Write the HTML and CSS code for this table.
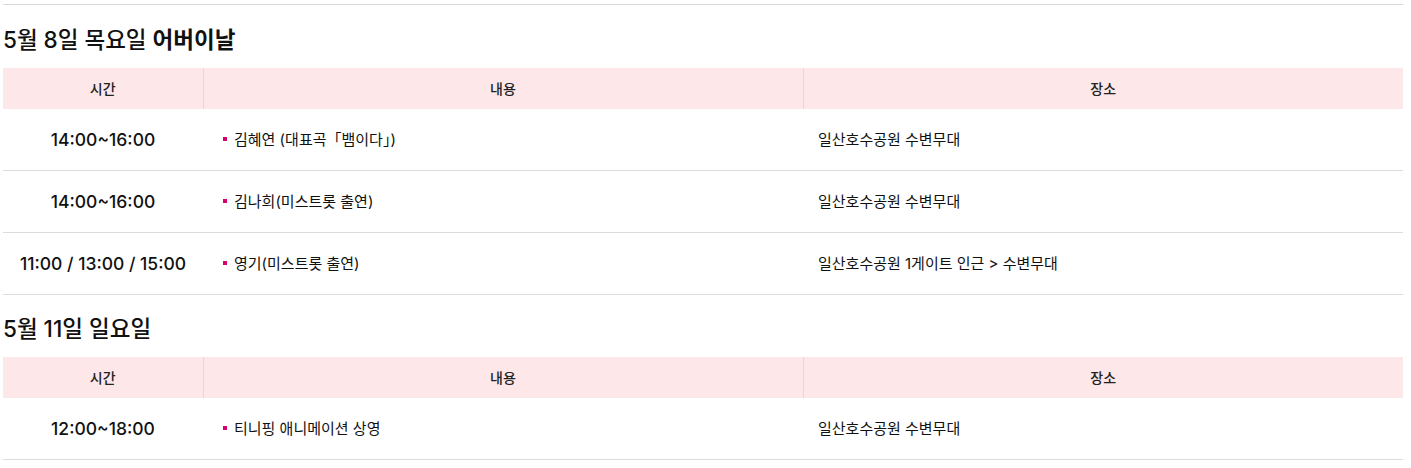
FILE: index.html
```html
<!DOCTYPE html>
<html lang="ko">
<head>
<meta charset="utf-8">
<link rel="stylesheet" href="styles.css">
</head>
<body>
<div class="wrap">
  <section class="day first">
    <h2 class="day-title">5월 8일 목요일 <strong>어버이날</strong></h2>
    <table class="sched">
      <colgroup><col class="c-time"><col class="c-cont"><col class="c-place"></colgroup>
      <thead><tr><th>시간</th><th>내용</th><th>장소</th></tr></thead>
      <tbody>
        <tr><td class="time">14:00~16:00</td><td class="cont"><span class="dot"></span>김혜연 (대표곡「뱀이다」)</td><td class="place">일산호수공원 수변무대</td></tr>
        <tr><td class="time">14:00~16:00</td><td class="cont"><span class="dot"></span>김나희(미스트롯 출연)</td><td class="place">일산호수공원 수변무대</td></tr>
        <tr><td class="time">11:00 / 13:00 / 15:00</td><td class="cont"><span class="dot"></span>영기(미스트롯 출연)</td><td class="place">일산호수공원 1게이트 인근 &gt; 수변무대</td></tr>
      </tbody>
    </table>
  </section>
  <section class="day">
    <h2 class="day-title">5월 11일 일요일</h2>
    <table class="sched">
      <colgroup><col class="c-time"><col class="c-cont"><col class="c-place"></colgroup>
      <thead><tr><th>시간</th><th>내용</th><th>장소</th></tr></thead>
      <tbody>
        <tr><td class="time">12:00~18:00</td><td class="cont"><span class="dot"></span>티니핑 애니메이션 상영</td><td class="place">일산호수공원 수변무대</td></tr>
      </tbody>
    </table>
  </section>
</div>
</body>
</html>
```
FILE: styles.css
```css
html, body { margin: 0; padding: 0; background: #fff; }
body {
  font-family: "Inter", "Noto Sans CJK KR", "Noto Sans", sans-serif;
  color: #111;
}
.wrap { padding: 4px 8px 0 3px; }
.day.first { border-top: 1px solid #d9d9d9; }
.day-title {
  margin: 20px 0 13px;
  font-size: 22.5px;
  line-height: 30px;
  font-weight: 500;
  color: #111;
}
.day + .day .day-title { margin-top: 19px; }
.day-title strong { font-weight: 700; }
.sched {
  width: 1400px;
  border-collapse: collapse;
  table-layout: fixed;
}
.c-time { width: 200px; }
.c-cont { width: 600px; }
.c-place { width: 600px; }
.sched th {
  height: 41px;
  padding: 0;
  line-height: 20px;
  background: #fde7e9;
  font-size: 14px;
  font-weight: 500;
  color: #222;
  border-left: 1px solid #efd3d6;
}
.sched th:first-child { border-left: none; }
.sched td {
  height: 61px;
  padding: 0;
  line-height: 22px;
  border-bottom: 1px solid #dcdcdc;
  font-size: 15px;
  color: #111;
}
.sched td.time {
  text-align: center;
  font-size: 17.5px;
  font-weight: 500;
}
.sched td.cont { padding-left: 20px; }
.sched td.place { padding-left: 15px; }
.dot {
  display: inline-block;
  width: 4px;
  height: 4px;
  background: #d4006b;
  margin-right: 7px;
  vertical-align: middle;
  position: relative;
  top: -1px;
}
```
